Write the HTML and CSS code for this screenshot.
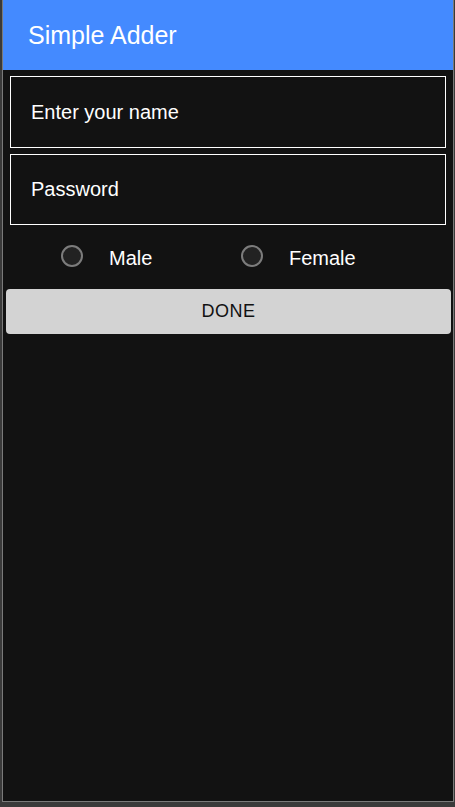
FILE: index.html
```html
<!DOCTYPE html>
<html>
<head>
<meta charset="utf-8">
<link rel="stylesheet" href="styles.css">
</head>
<body>
<div class="frame">
  <header class="appbar"><span class="title">Simple Adder</span></header>
  <main class="form">
    <div class="field field-name">Enter your name</div>
    <div class="field field-pass">Password</div>
    <div class="radios">
      <label class="radio"><span class="circle"></span><span class="label">Male</span></label>
      <label class="radio"><span class="circle"></span><span class="label">Female</span></label>
    </div>
    <button class="done">DONE</button>
  </main>
</div>
</body>
</html>
```
FILE: styles.css
```css
html, body {
  margin: 0;
  padding: 0;
  background: #3a3a3a;
  font-family: "Liberation Sans", Arial, sans-serif;
}
.frame {
  box-sizing: border-box;
  margin-left: 2px;
  width: 452px;
  height: 802px;
  border: 1px solid #7a7a7a;
  border-top: 0;
  background: #121212;
  display: flex;
  flex-direction: column;
}
.appbar {
  height: 70px;
  background: #448aff;
  display: flex;
  align-items: center;
  padding-left: 25px;
}
.title {
  color: #fff;
  font-size: 25px;
}
.form {
  display: flex;
  flex-direction: column;
}
.field {
  box-sizing: border-box;
  margin: 6px 7px 0 7px;
  height: 72px;
  border: 1px solid #fff;
  color: #fff;
  font-size: 20px;
  display: flex;
  align-items: center;
  padding-left: 20px;
}
.field-pass {
  height: 71px;
}
.radios {
  display: flex;
  height: 52px;
  margin-top: 6px;
  padding-left: 58px;
  align-items: center;
}
.radio {
  width: 180px;
  display: flex;
  align-items: center;
  color: #fff;
  font-size: 20px;
}
.circle {
  box-sizing: border-box;
  width: 22px;
  height: 22px;
  border: 2px solid #7c7c7c;
  border-radius: 50%;
  background: #222;
  margin-top: -3px;
}
.label {
  margin-left: 26px;
  margin-top: 3px;
}
.done {
  margin: 6px 2px 0 3px;
  height: 45px;
  border: 0;
  border-radius: 4px;
  background: #d3d3d3;
  color: #111;
  font-family: "Liberation Sans", Arial, sans-serif;
  font-size: 18px;
  letter-spacing: 0.5px;
}
```
